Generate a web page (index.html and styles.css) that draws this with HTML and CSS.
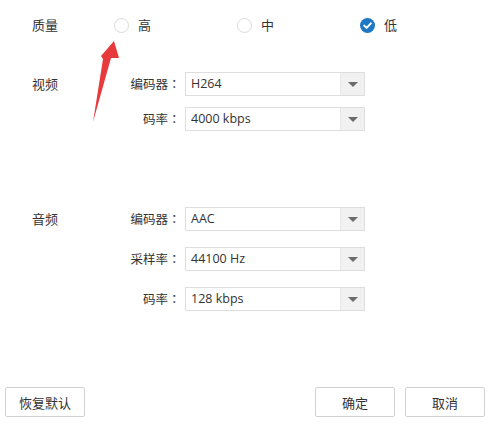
FILE: index.html
```html
<!DOCTYPE html>
<html lang="zh">
<head>
<meta charset="utf-8">
<link rel="stylesheet" href="styles.css">
</head>
<body>
<div class="page">
  <div class="quality">
    <div class="q-label">质量</div>
    <div class="opt"><span class="radio"></span><span class="opt-text">高</span></div>
    <div class="opt"><span class="radio"></span><span class="opt-text">中</span></div>
    <div class="opt"><span class="radio checked"><svg width="15" height="15" viewBox="0 0 15 15"><circle cx="7.5" cy="7.5" r="7.5" fill="#1f78c4"/><path d="M4.2 7.6 L6.6 9.9 L10.9 5.4" fill="none" stroke="#fff" stroke-width="2" stroke-linecap="round" stroke-linejoin="round"/></svg></span><span class="opt-text">低</span></div>
  </div>

  <div class="section video">
    <div class="sec-label">视频</div>
    <div class="fields">
      <div class="field"><div class="flabel">编码器<span class="colon">：</span></div><div class="select"><span class="val">H264</span><span class="arrow"></span></div></div>
      <div class="field"><div class="flabel">码率<span class="colon">：</span></div><div class="select"><span class="val">4000 kbps</span><span class="arrow"></span></div></div>
    </div>
  </div>

  <div class="section audio">
    <div class="sec-label">音频</div>
    <div class="fields">
      <div class="field"><div class="flabel">编码器<span class="colon">：</span></div><div class="select"><span class="val">AAC</span><span class="arrow"></span></div></div>
      <div class="field"><div class="flabel">采样率<span class="colon">：</span></div><div class="select"><span class="val">44100 Hz</span><span class="arrow"></span></div></div>
      <div class="field"><div class="flabel">码率<span class="colon">：</span></div><div class="select"><span class="val">128 kbps</span><span class="arrow"></span></div></div>
    </div>
  </div>

  <div class="buttons">
    <button class="btn">恢复默认</button>
    <div class="right">
      <button class="btn">确定</button>
      <button class="btn">取消</button>
    </div>
  </div>

  <svg class="annot" width="130" height="130" viewBox="0 0 130 130">
    <polygon points="114,41 119,58 111,58 93,122 103,59 101,56" fill="#e63a3c"/>
  </svg>
</div>
</body>
</html>
```

FILE: styles.css
```css
html, body {
  margin: 0;
  padding: 0;
  background: #fff;
}
body {
  font-family: "Noto Sans CJK SC", "Noto Sans", sans-serif;
  font-size: 13px;
  color: #333;
}
.page {
  position: relative;
  width: 491px;
  height: 440px;
  overflow: hidden;
}
.quality {
  display: flex;
  align-items: center;
  padding: 16px 0 0 32px;
  height: 18px;
}
.q-label {
  width: 82px;
  line-height: 18px;
}
.opt {
  width: 123px;
  display: flex;
  align-items: center;
}
.radio {
  width: 13px;
  height: 13px;
  border: 1px solid #dadada;
  border-radius: 50%;
  box-sizing: content-box;
  display: block;
}
.radio.checked {
  border: none;
  width: 15px;
  height: 15px;
}
.radio.checked svg { display: block; }
.opt-text {
  margin-left: 9px;
  line-height: 18px;
}
.section {
  display: flex;
  padding-left: 32px;
}
.video { margin-top: 38px; }
.audio { margin-top: 76px; }
.sec-label {
  width: 70px;
  line-height: 24px;
}
.fields {
  display: flex;
  flex-direction: column;
}
.video .fields { gap: 11px; }
.audio .fields { gap: 16px; }
.field {
  display: flex;
  align-items: center;
}
.flabel {
  width: 77px;
  margin-right: 6px;
  text-align: right;
  font-size: 12.5px;
  line-height: 24px;
  white-space: nowrap;
}
.colon {
  font-family: "Noto Sans CJK TC", sans-serif;
  display: inline-block;
  width: 11px;
  text-align: center;
}
.select {
  width: 180px;
  height: 24px;
  box-sizing: border-box;
  border: 1px solid #dedede;
  display: flex;
  align-items: stretch;
  background: #fff;
}
.val {
  flex: 1;
  padding-left: 5px;
  font-family: "Open Sans", "Noto Sans", sans-serif;
  font-size: 12.5px;
  line-height: 22px;
  color: #333;
}
.arrow {
  width: 23px;
  background: #f1f1f1;
  border-left: 1px solid #e8e8e8;
  position: relative;
}
.arrow::after {
  content: "";
  position: absolute;
  left: 7px;
  top: 9px;
  border-left: 5px solid transparent;
  border-right: 5px solid transparent;
  border-top: 5px solid #6b6b6b;
}
.buttons {
  margin-top: 76px;
  display: flex;
  justify-content: space-between;
  padding: 0 6px 0 5px;
}
.right {
  display: flex;
  gap: 10px;
}
.btn {
  width: 80px;
  height: 30px;
  background: #fff;
  border: 1px solid #d2d2d2;
  border-radius: 2px;
  font-family: "Noto Sans CJK SC", sans-serif;
  font-size: 13px;
  color: #333;
  padding: 0;
}
.annot {
  position: absolute;
  left: 0;
  top: 0;
}
```
